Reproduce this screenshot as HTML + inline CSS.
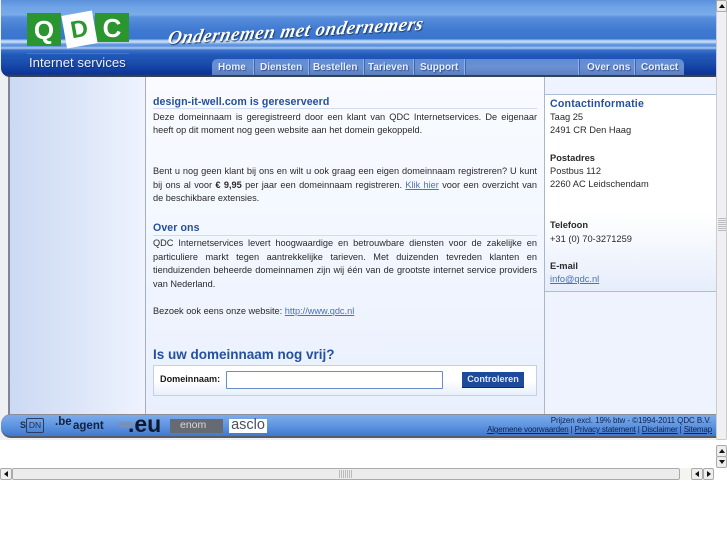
<!DOCTYPE html>
<html><head><meta charset="utf-8"><style>
html,body{margin:0;padding:0;width:727px;height:545px;overflow:hidden;background:#fff;font-family:"Liberation Sans",sans-serif}
div,a,span{position:absolute;white-space:nowrap;box-sizing:border-box}
.l{left:153px;width:384px;font-size:9.2px;line-height:13px;color:#2a2a2a}
.j{text-align:justify;text-align-last:justify;white-space:normal}
.h{left:153px;font-size:10.6px;line-height:13px;font-weight:bold;color:#24509f;letter-spacing:.08px}
.r{left:550px;font-size:9.3px;line-height:13px;color:#2a2a2a}
.l a,.r a{position:static;color:#4a72b8;text-decoration:underline}
.n{top:62px;font-size:10px;line-height:12px;font-weight:bold;color:#e8eefa;text-shadow:1px 1px 1px #2f5290}
.d{top:59px;height:16px;background:#8fb0e2;border-right:1px solid #3d66ae;width:2px}
.sb{background:#eee;border:1px solid #aaa;border-radius:2px}
.u,.o,.e,.w{width:0;height:0;border-style:solid;border-color:transparent}
.u{border-width:0 3px 4px;border-bottom-color:#111}
.o{border-width:4px 3px 0;border-top-color:#111}
.e{border-width:3px 4px 3px 0;border-right-color:#111}
.w{border-width:3px 0 3px 4px;border-left-color:#111}
</style></head><body>
<div style="left:0;top:0;width:717px;height:440px;background:#eef0f3"></div>
<div style="left:8px;top:76px;width:2px;height:340px;background:#7f8794"></div>
<div style="left:10px;top:76px;width:135px;height:338px;background:linear-gradient(90deg,#cbd9f3,#eef3fe)"></div>
<div style="left:145px;top:76px;width:1px;height:338px;background:#a7aebc"></div>
<div style="left:146px;top:76px;width:398px;height:338px;background:linear-gradient(#f9fbff,#f3f7ff 45%,#e9effd)"></div>
<div style="left:544px;top:76px;width:1px;height:338px;background:#aab6cc"></div>
<div style="left:545px;top:76px;width:172px;height:338px;background:#eef3fe"></div>
<div style="left:545px;top:94px;width:172px;height:1px;background:#aebcd4"></div>
<div style="left:545px;top:95px;width:172px;height:196px;background:linear-gradient(#fff,#fff 60%,#e6edfb)"></div>
<div style="left:545px;top:291px;width:172px;height:1px;background:#aebcd4"></div>

<div style="left:1px;top:0;width:716px;height:77px;border-radius:0 0 0 9px;background:linear-gradient(#5b90dc 0,#6da2e5 6px,#79abe8 15px,#5a90dc 17px,#4f86d8 22px,#3f7ad0 30px,#3a75ce 39px,#9cc0ee 40px,#cfe1f8 42px,#6a9ce0 44px,#5b8edb 46px,#a8c8f1 48px,#3b72cc 50px,#2159b9 55px,#1c4fae 62px,#0b349a 74px,#2a3b63 75px,#40454f 77px)"></div>

<div style="left:27px;top:13px;width:34px;height:33px;background:#2b962f"></div>
<div style="left:95px;top:13px;width:34px;height:29px;background:#2b962f"></div>
<div style="left:64px;top:13px;width:31px;height:33px;background:#fff;transform:rotate(-10deg)"></div>
<div style="left:27px;top:15px;width:34px;font-size:26px;line-height:30px;font-weight:bold;text-align:center;color:#fff">Q</div>
<div style="left:64px;top:15px;width:31px;font-size:24px;line-height:30px;font-weight:bold;text-align:center;color:#2b962f;transform:rotate(-10deg)">D</div>
<div style="left:95px;top:13px;width:34px;font-size:26px;line-height:30px;font-weight:bold;text-align:center;color:#fff">C</div>
<div style="left:27px;top:53px;width:102px;height:1px;background:#2b9a55"></div>
<div style="left:29px;top:55px;font-size:13.2px;line-height:16px;color:#edf2fb;text-shadow:1px 1px 1px #0e2c70">Internet services</div>

<div style="left:168px;top:29px;font-family:'Liberation Serif',serif;font-style:italic;font-weight:bold;font-size:19px;line-height:20px;letter-spacing:.5px;color:#fff;text-shadow:1px 1px 1px #17325f;transform:rotate(-3.2deg) skewX(-14deg);transform-origin:0 50%">Ondernemen met ondernemers</div>

<div style="left:212px;top:59px;width:472px;height:16px;border-radius:5px 5px 0 0;background:linear-gradient(#5f8bd6,#6b90d2 50%,#5c7fc0)"></div>
<div class="d" style="left:253px"></div><div class="d" style="left:308px"></div><div class="d" style="left:363px"></div><div class="d" style="left:413px"></div><div class="d" style="left:464px"></div><div class="d" style="left:578px"></div><div class="d" style="left:634px"></div>
<div class="n" style="left:218px">Home</div><div class="n" style="left:260px">Diensten</div><div class="n" style="left:313px">Bestellen</div><div class="n" style="left:368px">Tarieven</div><div class="n" style="left:420px">Support</div><div class="n" style="left:587px">Over ons</div><div class="n" style="left:641px">Contact</div>

<div class="h" style="top:96px">design-it-well.com is gereserveerd</div>
<div style="left:153px;top:108px;width:384px;height:1px;background:#cfdcf2"></div>
<div class="l j" style="top:111px">Deze domeinnaam is geregistreerd door een klant van QDC Internetservices. De eigenaar</div>
<div class="l" style="top:124px">heeft op dit moment nog geen website aan het domein gekoppeld.</div>
<div class="l j" style="top:165px">Bent u nog geen klant bij ons en wilt u ook graag een eigen domeinnaam registreren? U kunt</div>
<div class="l j" style="top:179px">bij ons al voor <b>€ 9,95</b> per jaar een domeinnaam registreren. <a>Klik hier</a> voor een overzicht van</div>
<div class="l" style="top:192px">de beschikbare extensies.</div>

<div class="h" style="top:222px">Over ons</div>
<div style="left:153px;top:235px;width:384px;height:1px;background:#cfdcf2"></div>
<div class="l j" style="top:237px">QDC Internetservices levert hoogwaardige en betrouwbare diensten voor de zakelijke en</div>
<div class="l j" style="top:251px">particuliere markt tegen aantrekkelijke tarieven. Met duizenden tevreden klanten en</div>
<div class="l j" style="top:264px">tienduizenden beheerde domeinnamen zijn wij één van de grootste internet service providers</div>
<div class="l" style="top:278px">van Nederland.</div>
<div class="l" style="top:305px">Bezoek ook eens onze website: <a>http://www.qdc.nl</a></div>

<div style="left:153px;top:346px;font-size:13.5px;line-height:17px;font-weight:bold;color:#24509f">Is uw domeinnaam nog vrij?</div>
<div style="left:153px;top:365px;width:384px;height:31px;border:1px solid #c3d0e8;background:linear-gradient(#fff,#fff 50%,#e8effc)"></div>
<div style="left:160px;top:373px;font-size:9.1px;line-height:13px;font-weight:bold;color:#1a1a1a">Domeinnaam:</div>
<div style="left:226px;top:371px;width:217px;height:18px;background:#fff;border:1px solid #6a8cc8;border-radius:1px"></div>
<div style="left:462px;top:372px;width:62px;height:16px;background:#1d4a9a;border-bottom:1px solid #0f2c60;font-size:9.1px;line-height:15px;font-weight:bold;color:#dfe8f8;text-align:center">Controleren</div>

<div class="h" style="left:550px;top:98px;letter-spacing:.2px">Contactinformatie</div>
<div class="r" style="top:111px">Taag 25</div>
<div class="r" style="top:124px">2491 CR Den Haag</div>
<div class="r" style="top:152px"><b>Postadres</b></div>
<div class="r" style="top:165px">Postbus 112</div>
<div class="r" style="top:178px">2260 AC Leidschendam</div>
<div class="r" style="top:219px"><b>Telefoon</b></div>
<div class="r" style="top:233px">+31 (0) 70-3271259</div>
<div class="r" style="top:260px"><b>E-mail</b></div>
<div class="r" style="top:273px"><a>info@qdc.nl</a></div>

<div style="left:1px;top:414px;width:716px;height:24px;border-radius:10px 0 0 10px;border-top:1px solid #8a8f98;border-bottom:2px solid #585c64;background:linear-gradient(#7cabe9,#5f95e0 50%,#3f78d0)"></div>
<div style="left:20px;top:420px;font-size:9px;line-height:11px;font-weight:bold;color:#1c2c4c">S</div>
<div style="left:26px;top:418px;width:18px;height:15px;border:1px solid #2a3c60;border-radius:2px;font-size:8.5px;line-height:13px;text-align:center;color:#1c2c4c">DN</div>
<div style="left:55px;top:416px;font-size:11.5px;line-height:13px;font-weight:bold;color:#14223f">.be</div>
<div style="left:73px;top:420px;font-size:11.5px;line-height:13px;font-weight:bold;color:#14223f">agent</div>
<div style="left:118px;top:422px;width:16px;height:6px;background:#7f8fa8;opacity:.7;border-radius:3px"></div>
<div style="left:128px;top:412px;font-size:23px;line-height:24px;font-weight:bold;color:#0f1a30">.eu</div>
<div style="left:170px;top:419px;width:53px;height:14px;background:#666b73;font-size:10.5px;line-height:13px;color:#d8d8d8;padding-left:10px">enom</div>
<div style="left:229px;top:419px;width:38px;height:14px;background:#fff;font-size:14.5px;line-height:13px;color:#49515e;text-align:center">asclo</div>
<div style="right:16px;top:414px;font-size:8px;line-height:13px;color:#10234f;letter-spacing:-.07px">Prijzen excl. 19% btw - ©1994-2011 QDC B.V.</div>
<div style="right:15px;top:423px;font-size:8px;line-height:13px;color:#10234f;letter-spacing:-.15px"><u>Algemene voorwaarden</u> | <u>Privacy statement</u> | <u>Disclaimer</u> | <u>Sitemap</u></div>

<div class="sb" style="left:716px;top:0;width:11px;height:440px;background:#f0f0f4;border-color:#ccc"></div>
<div class="sb" style="left:716px;top:0;width:11px;height:12px"><div class="u" style="left:2px;top:3px"></div></div>
<div style="left:718px;top:218px;width:8px;height:13px;background:repeating-linear-gradient(#bbb 0 1px,#f0f0f4 1px 2px)"></div>
<div class="sb" style="left:716px;top:445px;width:11px;height:12px"><div class="u" style="left:2px;top:3px"></div></div>
<div class="sb" style="left:716px;top:456px;width:11px;height:12px"><div class="o" style="left:2px;top:3px"></div></div>

<div class="sb" style="left:0;top:468px;width:12px;height:12px"><div class="e" style="left:3px;top:2px"></div></div>
<div class="sb" style="left:12px;top:468px;width:668px;height:12px;background:#ececec"></div>
<div style="left:339px;top:470px;width:14px;height:8px;background:repeating-linear-gradient(90deg,#bbb 0 1px,#ececec 1px 2px)"></div>
<div style="left:680px;top:468px;width:11px;height:12px;background:#f4f4f0"></div>
<div class="sb" style="left:691px;top:468px;width:12px;height:12px"><div class="e" style="left:3px;top:2px"></div></div>
<div class="sb" style="left:703px;top:468px;width:11px;height:12px"><div class="w" style="left:3px;top:2px"></div></div>
</body></html>
